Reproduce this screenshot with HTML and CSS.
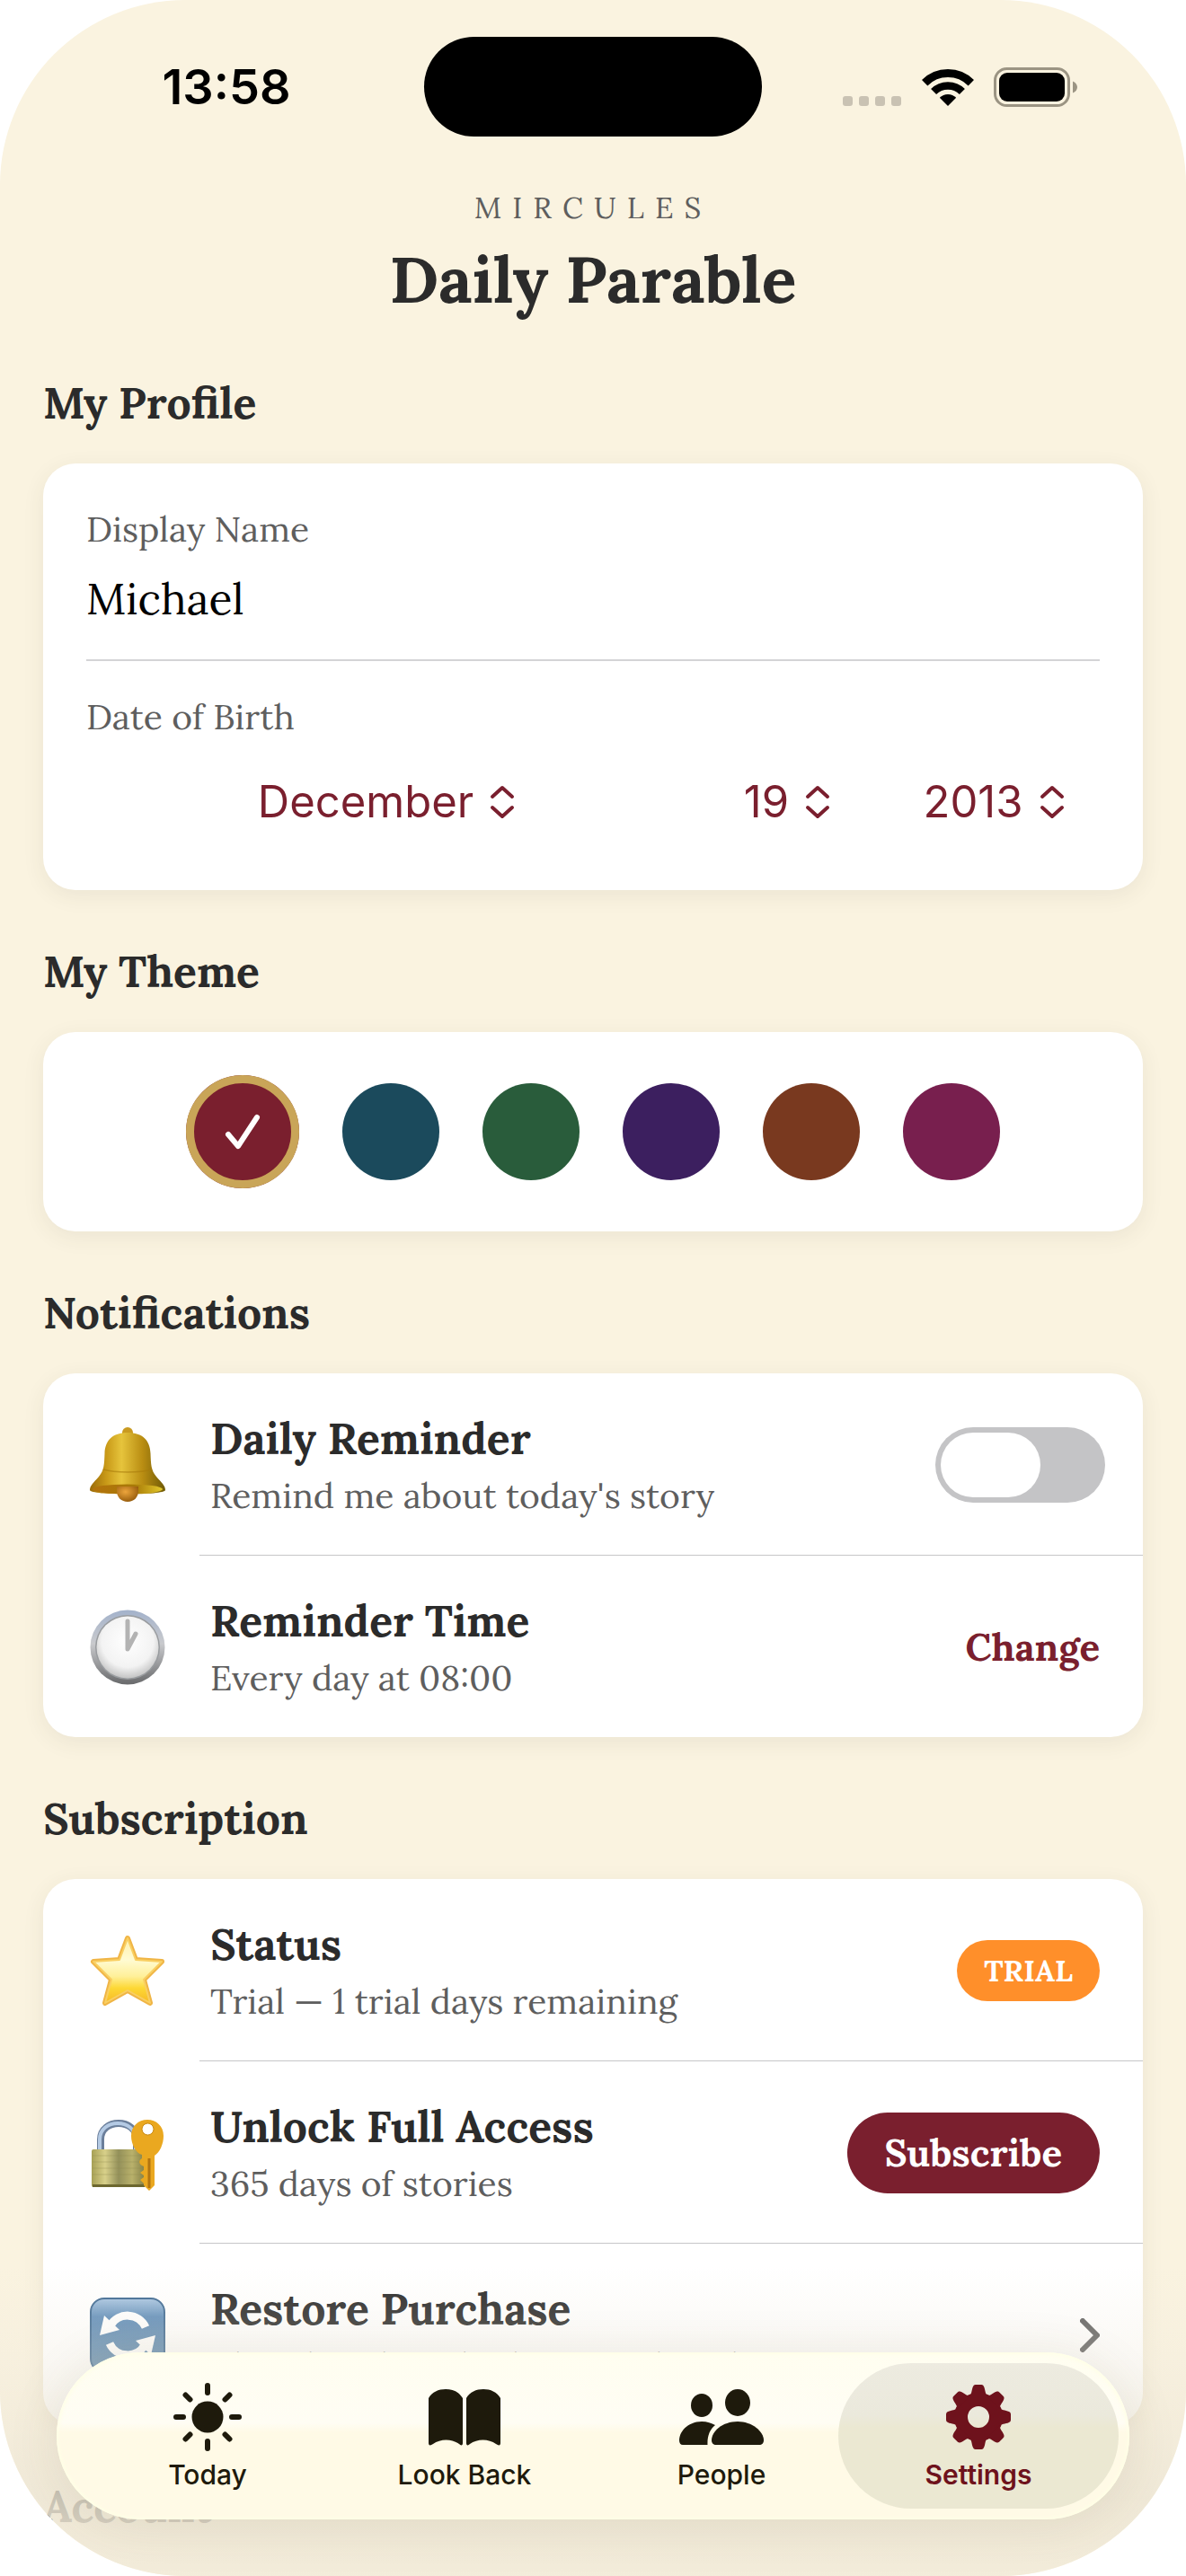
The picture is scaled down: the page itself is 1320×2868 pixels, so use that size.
FILE: index.html
```html
<!DOCTYPE html>
<html lang="en">
<head>
    <meta charset="UTF-8">
    <meta name="viewport" content="width=device-width, initial-scale=1">
    <title>Daily Parable</title>
    <link rel="stylesheet" href="styles.css">
</head>
<body>
<div class="screen">
    <div class="status-bar">
        <span class="time">13:58</span>
        <span class="island"></span>
        <div class="status-icons">
            <svg width="66" height="42" viewBox="0 0 66 42" fill="#c9c2b3">
                <rect x="0" y="31" width="11" height="11" rx="3"/>
                <rect x="18" y="31" width="11" height="11" rx="3"/>
                <rect x="36" y="31" width="11" height="11" rx="3"/>
                <rect x="54" y="31" width="11" height="11" rx="3"/>
            </svg>
            <svg width="58" height="42" viewBox="0 0 58 42" fill="none" stroke="#000">
                <path d="M3.2 16.2A36.5 36.5 0 0 1 54.8 16.2" stroke-width="9"/>
                <path d="M13.1 26.1A22.5 22.5 0 0 1 44.9 26.1" stroke-width="8.5"/>
                <path d="M29 42L19.8 32.8A13 13 0 0 1 38.2 32.8Z" fill="#000" stroke="none"/>
            </svg>
            <svg width="93" height="44" viewBox="0 0 93 44">
                <rect x="1.5" y="1.5" width="82" height="41" rx="13" fill="none" stroke="#9b9483" stroke-width="3"/>
                <rect x="6" y="6" width="73" height="32" rx="9"/>
                <path d="M88 15.500C91.500 17 93 19.500 93 22S91.500 27 88 28.500Z" fill="#9b9483"/>
            </svg>
        </div>
    </div>

    <header class="header">
        <p class="brand">MIRCULES</p>
        <h1>Daily Parable</h1>
    </header>

    <main class="content">
        <section>
            <h2>My Profile</h2>
            <div class="card profile">
                <label class="field-label" for="name">Display Name</label>
                <input class="name-input" type="text" id="name" value="Michael">
                <hr>
                <div class="field-label">Date of Birth</div>
                <div class="dob">
                    <label class="picker">
                        <select aria-label="Month">
                            <option>October</option>
                            <option>November</option>
                            <option selected>December</option>
                        </select>
                        <svg class="updown" viewBox="0 0 28 38"><path d="M3 13L14 3L25 13M3 25L14 35L25 25"/></svg>
                    </label>
                    <label class="picker">
                        <select aria-label="Day">
                            <option>18</option>
                            <option selected>19</option>
                            <option>20</option>
                        </select>
                        <svg class="updown" viewBox="0 0 28 38"><path d="M3 13L14 3L25 13M3 25L14 35L25 25"/></svg>
                    </label>
                    <label class="picker">
                        <select aria-label="Year">
                            <option>2012</option>
                            <option selected>2013</option>
                            <option>2014</option>
                        </select>
                        <svg class="updown" viewBox="0 0 28 38"><path d="M3 13L14 3L25 13M3 25L14 35L25 25"/></svg>
                    </label>
                </div>
            </div>
        </section>

        <section>
            <h2>My Theme</h2>
            <div class="card themes">
                <label class="swatch burgundy">
                    <input type="radio" name="theme" aria-label="Burgundy" checked>
                    <svg class="tick" viewBox="0 0 40 40"><path d="M4 23L15 36L36 4"/></svg>
                </label>
                <label class="swatch teal"><input type="radio" name="theme" aria-label="Teal"></label>
                <label class="swatch green"><input type="radio" name="theme" aria-label="Green"></label>
                <label class="swatch purple"><input type="radio" name="theme" aria-label="Purple"></label>
                <label class="swatch brown"><input type="radio" name="theme" aria-label="Brown"></label>
                <label class="swatch plum"><input type="radio" name="theme" aria-label="Plum"></label>
            </div>
        </section>

        <section>
            <h2>Notifications</h2>
            <div class="card">
                <div class="row">
                    <svg class="row-icon" viewBox="0 0 84 84">
                        <defs>
                            <linearGradient id="bell" x1="0" x2="1">
                                <stop offset="0" stop-color="#9a6a08"/>
                                <stop offset=".22" stop-color="#c99a18"/>
                                <stop offset=".42" stop-color="#e6c43c"/>
                                <stop offset=".7" stop-color="#b98d12"/>
                                <stop offset="1" stop-color="#6f5a06"/>
                            </linearGradient>
                            <linearGradient id="bellIn" x1="0" x2="1">
                                <stop offset="0" stop-color="#b3720c"/>
                                <stop offset=".6" stop-color="#a87a07"/>
                                <stop offset="1" stop-color="#e3c92c"/>
                            </linearGradient>
                            <radialGradient id="clapper" cx=".4" cy=".35" r=".7">
                                <stop offset="0" stop-color="#eda53c"/>
                                <stop offset="1" stop-color="#93590a"/>
                            </radialGradient>
                        </defs>
                        <rect x="36" y="0" width="12" height="14" rx="6" fill="#c99a20"/>
                        <path d="M42 6C25 6 17 15 16.500 29C16 41 16 48 10 55C4 62 0 65 0 70C0 76 84 76 84 70C84 65 80 62 74 55C68 48 68 41 67.500 29C67 15 59 6 42 6Z" fill="url(#bell)"/>
                        <path d="M15 47C28 51 56 51 69 47" fill="none" stroke="#a87b0c" stroke-width="1.500" opacity=".6"/>
                        <ellipse cx="42" cy="69" rx="39" ry="5.500" fill="url(#bellIn)"/>
                        <path d="M30 66H54V71C54 78 49 83 42 83S30 78 30 71Z" fill="url(#clapper)"/>
                    </svg>
                    <div class="row-text">
                        <h3 id="reminder">Daily Reminder</h3>
                        <p>Remind me about today's story</p>
                    </div>
                    <input class="toggle" type="checkbox" aria-labelledby="reminder">
                </div>
                <div class="row">
                    <svg class="row-icon" viewBox="0 0 84 84">
                        <defs>
                            <linearGradient id="rim" x1="0" y1="0" x2="0" y2="1">
                                <stop offset="0" stop-color="#a3b2cb"/>
                                <stop offset=".45" stop-color="#c9cacd"/>
                                <stop offset="1" stop-color="#68696b"/>
                            </linearGradient>
                            <radialGradient id="face" cx=".5" cy=".4" r=".6">
                                <stop offset="0" stop-color="#fff"/>
                                <stop offset=".7" stop-color="#f3f3f3"/>
                                <stop offset="1" stop-color="#c4c4c4"/>
                            </radialGradient>
                        </defs>
                        <circle cx="42" cy="42" r="41.500" fill="url(#rim)"/>
                        <circle cx="42" cy="42" r="36" fill="#999c9f"/>
                        <circle cx="42" cy="42" r="34.500" fill="url(#face)"/>
                        <path d="M42 13V44L51 27" fill="none" stroke="#b3b3b3" stroke-width="5" stroke-linecap="round" stroke-linejoin="round"/>
                    </svg>
                    <div class="row-text">
                        <h3>Reminder Time</h3>
                        <p>Every day at 08:00</p>
                    </div>
                    <button class="link-btn" type="button">Change</button>
                </div>
            </div>
        </section>

        <section>
            <h2>Subscription</h2>
            <div class="card">
                <div class="row">
                    <svg class="row-icon" viewBox="0 0 84 84">
                        <defs>
                            <linearGradient id="star" gradientUnits="userSpaceOnUse" x1="0" y1="3" x2="0" y2="81">
                                <stop offset="0" stop-color="#ffefa8"/>
                                <stop offset=".35" stop-color="#fffbd2"/>
                                <stop offset=".58" stop-color="#fff09a"/>
                                <stop offset=".75" stop-color="#fdd835"/>
                                <stop offset="1" stop-color="#f6b321"/>
                            </linearGradient>
                        </defs>
                        <path d="M42 6L51 30L80 32L60 52L67 78L42 64L17 78L24 52L4 32L33 30Z" fill="url(#star)" stroke="#f0b545" stroke-width="6" stroke-linejoin="round"/>
                        <path d="M42 6L51 30L80 32L60 52L67 78L42 64L17 78L24 52L4 32L33 30Z" fill="url(#star)" stroke="#f9cf62" stroke-width="2" stroke-linejoin="round"/>
                    </svg>
                    <div class="row-text">
                        <h3>Status</h3>
                        <p>Trial — 1 trial days remaining</p>
                    </div>
                    <span class="badge">TRIAL</span>
                </div>
                <div class="row">
                    <svg class="row-icon" viewBox="0 0 84 84">
                        <defs>
                            <linearGradient id="lock" x1="0" x2="1">
                                <stop offset="0" stop-color="#a7a055"/>
                                <stop offset=".25" stop-color="#d8d08a"/>
                                <stop offset=".5" stop-color="#93905a"/>
                                <stop offset=".75" stop-color="#b9b16b"/>
                                <stop offset="1" stop-color="#827e45"/>
                            </linearGradient>
                        </defs>
                        <path d="M12 40V27C12 3 52 3 52 27V40" fill="none" stroke="#6b7f9b" stroke-width="8"/>
                        <path d="M11 40V27C11 3 51 3 51 27V40" fill="none" stroke="#b4cae4" stroke-width="4"/>
                        <rect x="2" y="38" width="60" height="42" rx="2" fill="url(#lock)"/>
                        <path d="M3 45H61M3 52H61M3 59H61M3 66H61" stroke="#8f8a4e" opacity=".35"/>
                        <rect x="3" y="77" width="58" height="3" fill="#6c672f"/>
                        <path d="M58 44C51 42 46 32 46 23C46 12 54 5 64 5S82 12 82 23C82 32 78 41 72 45V78L66 84L60 78V76L56 72L60 69V67L56 64L60 61V57C54 55 54 50 58 48Z" fill="#eaa820"/>
                        <path d="M66 48V81" stroke="#b27510" stroke-width="3"/>
                        <ellipse cx="64.500" cy="15.500" rx="6.500" ry="6.500" fill="#fff" stroke="#c98a12"/>
                    </svg>
                    <div class="row-text">
                        <h3>Unlock Full Access</h3>
                        <p>365 days of stories</p>
                    </div>
                    <button class="subscribe" type="button">Subscribe</button>
                </div>
                <div class="row">
                    <svg class="row-icon" viewBox="0 0 84 84">
                        <defs>
                            <linearGradient id="blue" x1="0" y1="0" x2="0" y2="1">
                                <stop offset="0" stop-color="#a9c6e2"/>
                                <stop offset=".25" stop-color="#5f8db9"/>
                                <stop offset="1" stop-color="#6089ab"/>
                            </linearGradient>
                        </defs>
                        <rect x="1" y="1" width="82" height="82" rx="15" fill="url(#blue)" stroke="#3f6a93" stroke-width="2"/>
                        <g id="arrow" fill="#fff">
                            <path d="M62 33A22 22 0 0 0 23 31" fill="none" stroke="#fff" stroke-width="9"/>
                            <path d="M11 42L16 20L33 36Z"/>
                        </g>
                        <use href="#arrow" transform="rotate(180 42 42)"/>
                    </svg>
                    <div class="row-text">
                        <h3>Restore Purchase</h3>
                        <p>Already subscribed on another device</p>
                    </div>
                    <svg class="chevron" viewBox="0 0 22 38"><path d="M3 3L19 19L3 35"/></svg>
                </div>
            </div>
        </section>

        <section>
            <h2>Account</h2>
        </section>
    </main>

    <div class="dock">
        <nav class="tab-bar">
            <a class="tab" href="#today">
                <svg viewBox="0 0 76 76" width="76" height="76">
                    <circle cx="38" cy="38" r="17.500" fill="currentColor"/>
                    <path d="M38 3V11M38 65V73M3 38H11M65 38H73M13.500 13.500L18.500 18.500M57.500 57.500L62.500 62.500M13.500 62.500L18.500 57.500M57.500 18.500L62.500 13.500" stroke="currentColor" stroke-width="6" stroke-linecap="round"/>
                </svg>
                <span>Today</span>
            </a>
            <a class="tab" href="#look-back">
                <svg viewBox="0 0 80 76" width="80" height="76" fill="currentColor">
                    <path d="M0 17C4 10 11 7 19 7S34 10 38 17V67C38 70 36 70 34 68C26 62 13 62 5 68C2 70 0 70 0 67Z"/>
                    <path d="M42 17C46 10 53 7 61 7S76 10 80 17V67C80 70 78 70 75 68C67 62 54 62 46 68C44 70 42 70 42 67Z"/>
                </svg>
                <span>Look Back</span>
            </a>
            <a class="tab" href="#people">
                <svg viewBox="0 0 94 76" width="94" height="76" fill="currentColor">
                    <ellipse cx="25" cy="25" rx="12" ry="13"/>
                    <ellipse cx="65" cy="22" rx="14" ry="15"/>
                    <path d="M40 47C34 52 31 59 31.500 69H4C1.500 69 0 67 0 64C0 54 10 43 25 43C31 43 36 45 40 47Z"/>
                    <path d="M65 43C81 43 94 54 94 64C94 67 92 69 89 69H41C38 69 36 67 36 64C36 54 48 43 65 43Z"/>
                </svg>
                <span>People</span>
            </a>
            <a class="tab active" href="#settings">
                <svg viewBox="0 0 76 76" width="76" height="76" fill="currentColor">
                    <circle cx="38" cy="38" r="19.500" fill="none" stroke="currentColor" stroke-width="15"/>
                    <g id="teeth">
                        <path id="tooth" d="M27 15C31 13 30 8 32 4C33 2 34 2 36 2H40C42 2 43 2 44 4C46 8 45 13 49 15Z"/>
                        <use href="#tooth" transform="rotate(45 38 38)"/>
                        <use href="#tooth" transform="rotate(90 38 38)"/>
                        <use href="#tooth" transform="rotate(135 38 38)"/>
                    </g>
                    <use href="#teeth" transform="rotate(180 38 38)"/>
                </svg>
                <span>Settings</span>
            </a>
        </nav>
    </div>
</div>
</body>
</html>
```

FILE: styles.css
```css
*{margin:0;padding:0;box-sizing:border-box;}
:root{
    --serif: "Lora", "Liberation Serif", serif;
    --sans: "Inter", "Liberation Sans", sans-serif;
    --accent: #7a1f2e;
    --ink: #2b2b2b;
    --muted: #5e5e5e;
    --cream: #faf3e0;
    --line: #c6c6c8;
}
body{background: #fff;color: var(--ink);font-family: var(--serif);}
button, input, select{font: inherit;color: inherit;border: 0;background: none;outline: none;}
svg{display: block;flex: none;}

.screen{
    position: relative;
    min-height: 100vh;
    overflow: hidden;
    border-radius: 206px;
    background: var(--cream);
}

/* status bar */
.status-bar{
    display: grid;
    grid-template-columns: 1fr 376px 1fr;
    align-items: center;
    padding: 41px 32px 0;
    font-family: var(--sans);
}
.time{text-align: center;font-size: 54px;font-weight: 600;color: #000;}
.island{height: 111px;border-radius: 56px;background: #000;}
.status-icons{display: flex;justify-content: center;align-items: center;gap: 22px;}

.header{padding-top: 58px;text-align: center;}
.brand{font-size: 33px;line-height: 42px;letter-spacing: 12px;color: var(--muted);}
h1{margin-top: 12px;font-size: 72px;line-height: 94px;font-weight: bold;}

.content{padding: 0 48px;}
h2{padding-top: 60px;margin-bottom: 36px;font-size: 48px;line-height: 62px;font-weight: bold;}
.card{
    border-radius: 36px;
    background: #fff;
    box-shadow: 0 6px 24px rgba(60,70,50,.08);
}

/* profile */
.profile{display: flex;flex-direction: column;padding: 48px;}
.field-label{font-size: 39px;line-height: 50px;color: var(--muted);}
.name-input{width: 100%;height: 62px;margin-top: 21px;font-size: 48px;color: #000;}
.profile hr{height: 2px;margin: 37px 0;border: 0;background: #d4d4d6;}
.dob{
    display: grid;
    grid-template-columns: 1fr 224px 236px;
    align-items: center;
    height: 92px;
    margin: 24px 0 4px;
    font-family: var(--sans);
    font-size: 49px;
    color: var(--accent);
}
.picker{display: flex;justify-content: center;align-items: center;gap: 18px;}
.picker select{appearance: none;field-sizing: content;line-height: 62px;}
.updown{width: 28px;height: 38px;}
.updown path, .tick path, .chevron path{
    fill: none;
    stroke: currentColor;
    stroke-width: 4;
    stroke-linecap: round;
    stroke-linejoin: round;
}

/* themes */
.themes{display: flex;justify-content: center;align-items: center;gap: 48px;padding: 48px;}
.swatch{position: relative;display: grid;place-items: center;border-radius: 50%;}
.swatch input{appearance: none;display: block;width: 108px;height: 108px;border-radius: 50%;}
.swatch input:checked{width: 126px;height: 126px;border: 9px solid #c9a558;}
.burgundy{background: var(--accent);}
.teal{background: #1b4a5c;}
.green{background: #295c3b;}
.purple{background: #3c1f5f;}
.brown{background: #79391f;}
.plum{background: #781f4e;}
.tick{position: absolute;width: 40px;height: 40px;color: #fff;}
.tick path{stroke-width: 6;}

/* list rows */
.row{position: relative;display: flex;align-items: center;padding: 42px 48px 41px 52px;}
.row + .row{margin-top: 1px;}
.row + .row::before{
    content: "";
    position: absolute;
    top: -1px;
    left: 174px;
    right: 0;
    height: 1px;
    background: var(--line);
}
.row-icon{width: 84px;height: 84px;}
.row-text{flex: 1;margin-left: 50px;}
h3{font-size: 48px;line-height: 62px;font-weight: bold;}
.row-text p{margin-top: 7px;font-size: 39px;line-height: 50px;color: var(--muted);}
.toggle{
    appearance: none;
    width: 189px;
    height: 84px;
    margin-right: -6px;
    padding: 6px;
    border-radius: 42px;
    background: #c4c4c6;
}
.toggle::before{content: "";display: block;width: 111px;height: 72px;border-radius: 36px;background: #fff;}
.toggle:checked{background: var(--accent);}
.toggle:checked::before{margin-left: auto;}
.link-btn{font-size: 42px;font-weight: bold;color: var(--accent);}
.badge{padding: 0 30px;border-radius: 34px;background: #ff8f2a;color: #fff;font-size: 33px;line-height: 68px;font-weight: bold;}
.subscribe{padding: 0 42px;border-radius: 45px;background: var(--accent);color: #fff;font-size: 42px;line-height: 90px;font-weight: bold;}
.chevron{width: 22px;height: 38px;color: #5e5e5e;}
.chevron path{stroke-width: 6;}

/* bottom tabs, floating over the faded list */
.dock{
    position: absolute;
    left: 0;
    right: 0;
    bottom: 0;
    padding: 96px 63px 63px;
    background: linear-gradient(rgba(242,236,222,0), rgba(240,233,218,.3) 30%, rgba(238,231,214,.82) 75%, rgba(243,236,218,.95));
}
.tab-bar{
    display: flex;
    padding: 12px 25px;
    border-radius: 93px;
    background: linear-gradient(#fffef0, #fffdf4 42%, #fffae6 48%, #fffae6);
    box-shadow: inset 0 0 4px 2px #ffffe6, 0 6px 60px rgba(80,70,30,.1);
}
.tab{
    position: relative;
    flex: 1;
    display: flex;
    flex-direction: column;
    align-items: center;
    height: 162px;
    padding-top: 22px;
    font-family: var(--sans);
    font-size: 30px;
    line-height: 36px;
    font-weight: 500;
    text-decoration: none;
    color: #1e1a0c;
}
.tab svg, .tab span{position: relative;}
.tab span{margin-top: 8px;}
.active{color: #6e121c;font-weight: 600;}
.active::before{
    content: "";
    position: absolute;
    inset: 0 -13px;
    border-radius: 81px;
    background: linear-gradient(#edebe0, #ebe9dc 36%, #ebe8d2 44%, #ebe8d2);
}
```
